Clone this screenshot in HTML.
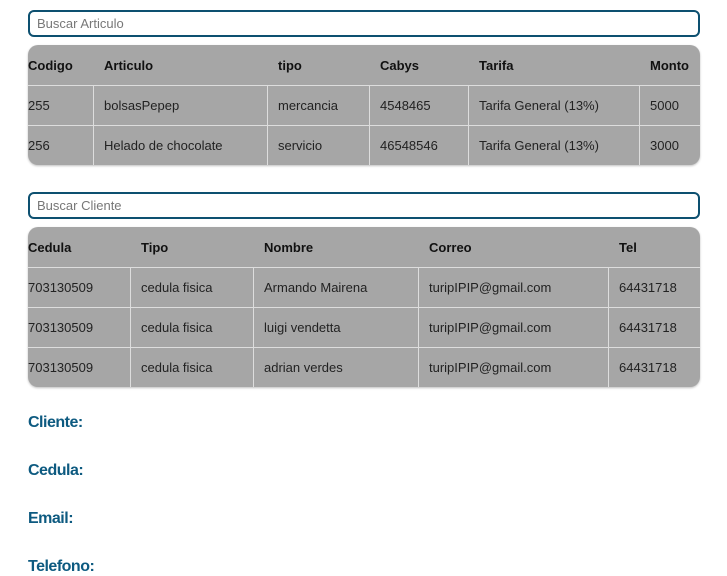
<!DOCTYPE html>
<html><head><meta charset="utf-8"><style>
body{margin:0;background:#fff;font-family:"Liberation Sans",sans-serif;width:727px;height:564px;overflow:hidden;position:relative}
.in{position:absolute;left:28px;height:23px;border:2px solid #0d5070;border-radius:6px;font-size:13px;color:#777;line-height:23px;padding-left:7px;box-sizing:content-box;width:661px}
.tb{position:absolute;left:28px;width:672px;background:#a6a6a6;border-radius:10px;overflow:hidden;box-shadow:0 1px 2px rgba(0,0,0,.25)}
.r{position:relative;height:40px;font-size:13px;color:#222}
.r+.r{border-top:1px solid #ddd;height:39px}
.c{position:absolute;top:0;line-height:40px;height:100%;white-space:nowrap}
.r+.r .c{line-height:39px}
.h .c{font-weight:bold;color:#111;line-height:41px}
.v{position:absolute;top:0;bottom:0;width:1px;background:#ddd}
.lb{position:absolute;left:28px;color:#0d5a80;font-size:16px;font-weight:bold;letter-spacing:-.5px}
</style></head><body>
<div class="in" style="top:10px">Buscar Articulo</div>
<div class="tb" style="top:45px;height:120px">
<div class="r h"><span class="c" style="left:0">Codigo</span><span class="c" style="left:76px">Articulo</span><span class="c" style="left:250px">tipo</span><span class="c" style="left:352px">Cabys</span><span class="c" style="left:451px">Tarifa</span><span class="c" style="left:622px">Monto</span></div>
<div class="r"><i class="v" style="left:65px"></i><i class="v" style="left:239px"></i><i class="v" style="left:341px"></i><i class="v" style="left:440px"></i><i class="v" style="left:611px"></i><span class="c" style="left:0">255</span><span class="c" style="left:76px">bolsasPepep</span><span class="c" style="left:250px">mercancia</span><span class="c" style="left:352px">4548465</span><span class="c" style="left:451px">Tarifa General (13%)</span><span class="c" style="left:622px">5000</span></div>
<div class="r"><i class="v" style="left:65px"></i><i class="v" style="left:239px"></i><i class="v" style="left:341px"></i><i class="v" style="left:440px"></i><i class="v" style="left:611px"></i><span class="c" style="left:0">256</span><span class="c" style="left:76px">Helado de chocolate</span><span class="c" style="left:250px">servicio</span><span class="c" style="left:352px">46548546</span><span class="c" style="left:451px">Tarifa General (13%)</span><span class="c" style="left:622px">3000</span></div>
</div>
<div class="in" style="top:192px">Buscar Cliente</div>
<div class="tb" style="top:227px;height:160px">
<div class="r h"><span class="c" style="left:0">Cedula</span><span class="c" style="left:113px">Tipo</span><span class="c" style="left:236px">Nombre</span><span class="c" style="left:401px">Correo</span><span class="c" style="left:591px">Tel</span></div>
<div class="r"><i class="v" style="left:102px"></i><i class="v" style="left:225px"></i><i class="v" style="left:390px"></i><i class="v" style="left:580px"></i><span class="c" style="left:0">703130509</span><span class="c" style="left:113px">cedula fisica</span><span class="c" style="left:236px">Armando Mairena</span><span class="c" style="left:401px">turipIPIP@gmail.com</span><span class="c" style="left:591px">64431718</span></div>
<div class="r"><i class="v" style="left:102px"></i><i class="v" style="left:225px"></i><i class="v" style="left:390px"></i><i class="v" style="left:580px"></i><span class="c" style="left:0">703130509</span><span class="c" style="left:113px">cedula fisica</span><span class="c" style="left:236px">luigi vendetta</span><span class="c" style="left:401px">turipIPIP@gmail.com</span><span class="c" style="left:591px">64431718</span></div>
<div class="r"><i class="v" style="left:102px"></i><i class="v" style="left:225px"></i><i class="v" style="left:390px"></i><i class="v" style="left:580px"></i><span class="c" style="left:0">703130509</span><span class="c" style="left:113px">cedula fisica</span><span class="c" style="left:236px">adrian verdes</span><span class="c" style="left:401px">turipIPIP@gmail.com</span><span class="c" style="left:591px">64431718</span></div>
</div>
<div class="lb" style="top:414px">Cliente:</div>
<div class="lb" style="top:462px">Cedula:</div>
<div class="lb" style="top:510px">Email:</div>
<div class="lb" style="top:558px">Telefono:</div>
</body></html>
